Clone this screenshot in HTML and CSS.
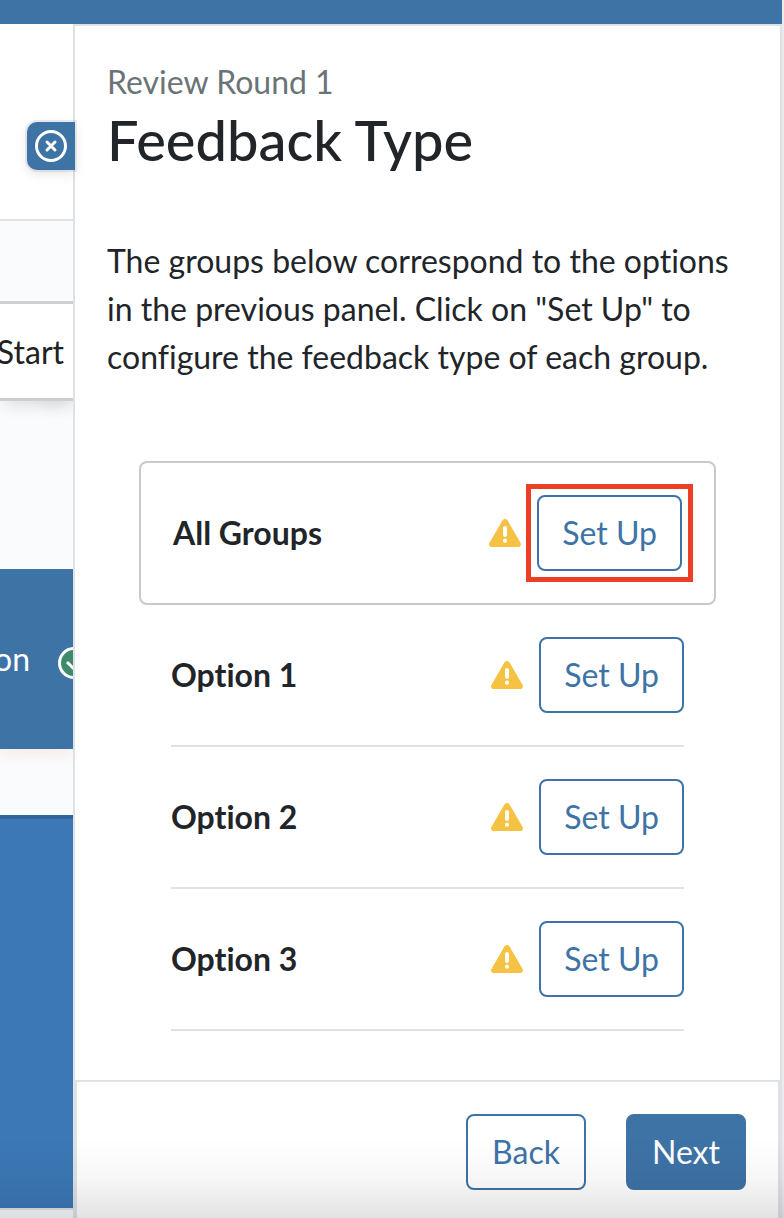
FILE: index.html
```
<!DOCTYPE html>
<html lang="en">

<head>
	<meta charset="UTF-8">
	<meta name="viewport" content="width=device-width, initial-scale=1">
	<title>Feedback Type</title>
	<link rel="stylesheet" href="styles.css">
</head>

<body>
	<!-- shared warning icon -->
	<svg class="defs" aria-hidden="true">
		<symbol id="warning" viewBox="0 0 32 28">
			<path fill="#f6c244" fill-rule="evenodd" d="M13.4 1.5C14.6-.5 17.4-.5 18.6 1.5L31.6 24C32.6 26 31.4 28 29 28H3C.6 28-.6 26 .4 24ZM16 7C14.900 7 14 7.900 14 9V16C14 18.600 18 18.600 18 16V9C18 7.900 17.100 7 16 7ZM16 19.600A2.100 2.100 0 1 0 16 23.800A2.100 2.100 0 1 0 16 19.600Z"/>
		</symbol>
	</svg>

	<div class="topbar"></div>

	<div class="layout">
		<!-- page behind the panel -->
		<div class="page">
			<div class="page-head"></div>
			<div class="step">Start</div>
			<div class="stage">
				<span>on</span>
				<svg class="check" viewBox="0 0 32 32" aria-hidden="true">
					<circle cx="16" cy="16" r="14.500" fill="#3d8b6b" stroke="#fff" stroke-width="3"/>
					<path d="M9 15l6 6 9-9" fill="none" stroke="#fff" stroke-width="3"/>
				</svg>
			</div>
			<div class="block"></div>
			<div class="page-end"></div>
		</div>

		<main class="panel">
			<button type="button" class="close" aria-label="Close">
				<svg viewBox="0 0 32 32" aria-hidden="true">
					<circle cx="16" cy="16" r="14.500" fill="none" stroke="#fff" stroke-width="3"/>
					<path d="M12 12l8 8M20 12l-8 8" stroke="#fff" stroke-width="3" stroke-linecap="round"/>
				</svg>
			</button>

			<div class="panel-body">
				<p class="round">Review Round 1</p>
				<h1>Feedback Type</h1>
				<p class="intro">The groups below correspond to the options in the previous panel. Click on "Set Up" to configure the feedback type of each group.</p>

				<div class="groups">
					<div class="group all">
						<span class="name">All Groups</span>
						<svg class="warn" aria-hidden="true"><use href="#warning"/></svg>
						<span class="highlight"><button type="button" class="btn">Set Up</button></span>
					</div>
					<ul class="options">
						<li class="group">
							<span class="name">Option 1</span>
							<svg class="warn" aria-hidden="true"><use href="#warning"/></svg>
							<button type="button" class="btn">Set Up</button>
						</li>
						<li class="group">
							<span class="name">Option 2</span>
							<svg class="warn" aria-hidden="true"><use href="#warning"/></svg>
							<button type="button" class="btn">Set Up</button>
						</li>
						<li class="group">
							<span class="name">Option 3</span>
							<svg class="warn" aria-hidden="true"><use href="#warning"/></svg>
							<button type="button" class="btn">Set Up</button>
						</li>
					</ul>
				</div>
			</div>

			<footer class="panel-foot">
				<button type="button" class="btn">Back</button>
				<button type="button" class="btn primary">Next</button>
			</footer>
		</main>
	</div>

	<div class="shade"></div>
</body>

</html>
```
FILE: styles.css
```
* {
	box-sizing: border-box;
	margin: 0;
	padding: 0;
}
body {
	display: flex;
	flex-direction: column;
	min-height: 100vh;
	border-right: 2px solid #ebebeb;
	background: #fff;
	color: #212529;
	font: 32px/48px Lato, sans-serif;
	font-variant-ligatures: none;
}
.defs {
	display: none;
}
.topbar {
	height: 24px;
	background: #3e73a6;
}
.layout {
	flex: 1;
	display: flex;
}

/* page behind */
.page {
	width: 73px;
	overflow: hidden;
	display: flex;
	flex-direction: column;
	background: #fafbfd;
}
.page-head {
	height: 197px;
	background: #fff;
	border-bottom: 2px solid #dee2e6;
}
.step {
	display: flex;
	justify-content: flex-end;
	margin-top: 80px;
	padding: 24px 9px 23px 0;
	height: 100px;
	background: #fff;
	border-top: 3px solid #cfcfd1;
	border-bottom: 3px solid #cfcfd1;
	box-shadow: 0 8px 16px -4px rgba(0, 0, 0, .12), 40px 4px 16px rgba(0, 0, 0, .06);
	clip-path: inset(0 0 -32px);
	color: #212121;
}
.stage {
	display: flex;
	align-items: center;
	justify-content: flex-end;
	gap: 28px;
	height: 180px;
	margin-top: 168px;
	background: #3e73a6;
	box-shadow: 0 4px 16px rgba(240, 120, 80, .15);
	clip-path: inset(0 0 -32px);
	color: #fff;
}
.stage span {
	flex: none;
}
.check {
	flex: none;
	width: 32px;
	height: 32px;
	margin: 8px -17px 0 0;
}
.block {
	flex: 1;
	margin-top: 66px;
	background: #3c78b6;
	border-top: 4px solid #2f659c;
}
.page-end {
	height: 10px;
	border-top: 2px solid #dee2e6;
}

/* panel */
.panel {
	position: relative;
	flex: 1;
	min-width: 0;
	display: flex;
	flex-direction: column;
	background: #fff;
	border: 2px solid #dee2e6;
	border-bottom: 0;
}
.close {
	position: absolute;
	top: 96px;
	right: 100%;
	width: 48px;
	height: 48px;
	padding: 8px;
	border: 0;
	border-radius: 10px 0 0 10px;
	background: #3e73a6;
	box-shadow: 0 0 0 2px rgba(62, 80, 120, .1), 0 4px 12px rgba(0, 0, 0, .1);
}
.close svg {
	display: block;
}
.panel-body {
	flex: 1;
	padding: 32px 32px 49px;
}
.round {
	color: #6a7478;
}
h1 {
	margin-bottom: 64px;
	font-size: 56px;
	font-weight: 500;
	line-height: 67px;
}
.groups {
	margin-top: 80px;
	padding: 0 32px;
}
.group {
	display: flex;
	align-items: center;
	gap: 16px;
	padding: 32px 0;
	border-bottom: 2px solid #dee2e6;
}
.all {
	padding: 32px;
	border: 2px solid #c9c9cb;
	border-radius: 8px;
}
.options {
	padding: 0 32px;
	list-style: none;
}
.name {
	flex: 1;
	font-weight: 700;
}
.warn {
	width: 32px;
	height: 28px;
}
.btn {
	display: block;
	padding: 12px 24px;
	background: transparent;
	border: 2px solid #3e73a6;
	border-radius: 8px;
	color: #3e73a6;
	font: inherit;
}
.group .btn {
	padding: 12px 23px;
}
.primary {
	background: #3e73a6;
	color: #fff;
}
/* red frame around the button to click */
.highlight {
	position: relative;
}
.highlight::after {
	content: "";
	position: absolute;
	inset: -11px;
	border: 5px solid #eb4025;
	pointer-events: none;
}
.panel-foot {
	display: flex;
	justify-content: flex-end;
	gap: 40px;
	padding: 32px 32px 28px;
	border: 2px solid #dee2e6;
	border-bottom: 0;
}

/* darker bottom edge of the window */
.shade {
	position: fixed;
	left: 0;
	right: 0;
	bottom: 0;
	height: 80px;
	background: linear-gradient(transparent, rgba(0, 0, 0, .03) 50%, rgba(0, 0, 0, .11));
	pointer-events: none;
}
```
